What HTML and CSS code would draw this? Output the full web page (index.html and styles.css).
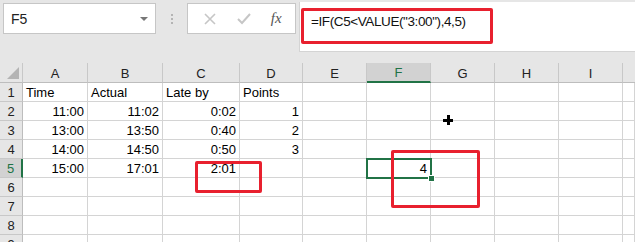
FILE: index.html
```html
<!DOCTYPE html>
<html lang="en">
<head>
  <meta charset="UTF-8">
  <title>Sheet - Late by</title>
  <link rel="stylesheet" href="styles.css">
</head>
<body>

  <div class="toolbar">
    <div class="name-box">
      <span>F5</span>
      <span class="arrow"></span>
    </div>
    <div class="grip"><i></i><i></i><i></i></div>
    <div class="fx-box">
      <svg width="14" height="14" viewBox="0 0 14 14"><path d="M2 2 L12 12 M12 2 L2 12" stroke="#c6c6c6" stroke-width="1.6" fill="none"/></svg>
      <svg width="16" height="14" viewBox="0 0 16 14"><path d="M2 7 L6 11 L14 2" stroke="#c6c6c6" stroke-width="2" fill="none"/></svg>
      <span class="fx">fx</span>
    </div>
    <div class="formula">=IF(C5&lt;VALUE("3:00"),4,5)</div>
  </div>

  <div class="sheet">
    <div class="corner"><span class="tri"></span></div>
    <div class="col-head">A</div>
    <div class="col-head">B</div>
    <div class="col-head">C</div>
    <div class="col-head">D</div>
    <div class="col-head">E</div>
    <div class="col-head active">F</div>
    <div class="col-head">G</div>
    <div class="col-head">H</div>
    <div class="col-head">I</div>
    <div class="col-head last"></div>

    <div class="row-head">1</div>
    <div class="cell">Time</div>
    <div class="cell">Actual</div>
    <div class="cell">Late by</div>
    <div class="cell">Points</div>
    <div class="cell"></div><div class="cell"></div><div class="cell"></div><div class="cell"></div><div class="cell"></div><div class="cell"></div>

    <div class="row-head">2</div>
    <div class="cell num">11:00</div>
    <div class="cell num">11:02</div>
    <div class="cell num">0:02</div>
    <div class="cell num">1</div>
    <div class="cell"></div><div class="cell"></div><div class="cell"></div><div class="cell"></div><div class="cell"></div><div class="cell"></div>

    <div class="row-head">3</div>
    <div class="cell num">13:00</div>
    <div class="cell num">13:50</div>
    <div class="cell num">0:40</div>
    <div class="cell num">2</div>
    <div class="cell"></div><div class="cell"></div><div class="cell"></div><div class="cell"></div><div class="cell"></div><div class="cell"></div>

    <div class="row-head">4</div>
    <div class="cell num">14:00</div>
    <div class="cell num">14:50</div>
    <div class="cell num">0:50</div>
    <div class="cell num">3</div>
    <div class="cell"></div><div class="cell"></div><div class="cell"></div><div class="cell"></div><div class="cell"></div><div class="cell"></div>

    <div class="row-head active">5</div>
    <div class="cell num">15:00</div>
    <div class="cell num">17:01</div>
    <div class="cell num">2:01</div>
    <div class="cell"></div>
    <div class="cell"></div>
    <div class="cell num">4</div>
    <div class="cell"></div><div class="cell"></div><div class="cell"></div><div class="cell"></div>

    <div class="row-head">6</div>
    <div class="cell"></div><div class="cell"></div><div class="cell"></div><div class="cell"></div><div class="cell"></div><div class="cell"></div><div class="cell"></div><div class="cell"></div><div class="cell"></div><div class="cell"></div>

    <div class="row-head">7</div>
    <div class="cell"></div><div class="cell"></div><div class="cell"></div><div class="cell"></div><div class="cell"></div><div class="cell"></div><div class="cell"></div><div class="cell"></div><div class="cell"></div><div class="cell"></div>

    <div class="row-head">8</div>
    <div class="cell"></div><div class="cell"></div><div class="cell"></div><div class="cell"></div><div class="cell"></div><div class="cell"></div><div class="cell"></div><div class="cell"></div><div class="cell"></div><div class="cell"></div>

    <div class="row-head">9</div>
    <div class="cell"></div><div class="cell"></div><div class="cell"></div><div class="cell"></div><div class="cell"></div><div class="cell"></div><div class="cell"></div><div class="cell"></div><div class="cell"></div><div class="cell"></div>
  </div>

  <!-- overlays: selection, cursor and the red call-outs -->
  <div class="selection"><span class="handle"></span></div>
  <div class="cursor"></div>
  <div class="callout callout-formula"></div>
  <div class="callout callout-late"></div>
  <div class="callout callout-result"></div>

</body>
</html>
```

FILE: styles.css
```css
body {
  margin: 0;
  background: #e6e6e6;
  font-family: 'Liberation Sans', Arial, sans-serif;
  font-size: 13px;
  color: #000;
  width: 635px;
  height: 242px;
  overflow: hidden;
  position: relative;
}

.toolbar {
  display: flex;
  align-items: flex-start;
  height: 63px;
  padding-top: 3px;
  box-sizing: border-box;
}

.name-box {
  margin-left: 3px;
  width: 153px;
  height: 31px;
  background: #fff;
  border: 1px solid #c6c6c6;
  box-sizing: border-box;
  display: flex;
  align-items: center;
  justify-content: space-between;
  padding: 0 7px 0 7px;
  font-size: 14px;
  color: #222;
}

.arrow {
  width: 0;
  height: 0;
  border-left: 4px solid transparent;
  border-right: 4px solid transparent;
  border-top: 4px solid #777;
}

.grip {
  width: 31px;
  height: 31px;
  display: flex;
  flex-direction: column;
  align-items: center;
  justify-content: center;
  gap: 2px;
}

.grip i {
  width: 2px;
  height: 2px;
  background: #b4b4b4;
}

.fx-box {
  width: 109px;
  height: 31px;
  background: #fff;
  border: 1px solid #c6c6c6;
  box-sizing: border-box;
  display: flex;
  align-items: center;
  justify-content: space-around;
  padding: 0 4px 0 6px;
}

.fx {
  font-family: 'Liberation Serif', serif;
  font-style: italic;
  font-size: 15px;
  color: #555;
}

.formula {
  flex: 1;
  margin-left: 3px;
  height: 50px;
  margin-top: -1px;
  background: #fff;
  border-left: 1px solid #d4d4d4;
  border-bottom: 1px solid #d4d4d4;
  box-sizing: border-box;
  padding: 12px 0 0 11px;
  font-size: 13.5px;
  letter-spacing: -0.4px;
  color: #111;
}

.sheet {
  display: grid;
  grid-template-columns: 23px 65px 75px 77px 63px 64px 64px 64px 64px 64px 12px;
  grid-template-rows: 20px repeat(9, 19px);
  background: #fff;
}

.corner {
  background: #e6e6e6;
  border-right: 1px solid #c8c8c8;
  border-bottom: 1px solid #bdbdbd;
  position: relative;
}

.tri {
  position: absolute;
  right: 3px;
  bottom: 3px;
  width: 0;
  height: 0;
  border-left: 12px solid transparent;
  border-bottom: 12px solid #b4b4b4;
}

.col-head {
  background: #e6e6e6;
  border-right: 1px solid #c8c8c8;
  border-bottom: 1px solid #bdbdbd;
  display: flex;
  align-items: center;
  justify-content: center;
  color: #222;
  padding-top: 1px;
}

.col-head.last {
  border-right: none;
}

.col-head.active {
  background: #d2d2d2;
  border-bottom: 2px solid #217346;
  color: #217346;
}

.row-head {
  background: #e6e6e6;
  border-right: 1px solid #bdbdbd;
  border-bottom: 1px solid #c8c8c8;
  display: flex;
  align-items: flex-end;
  justify-content: center;
  color: #222;
  line-height: 17px;
}

.row-head.active {
  background: #d2d2d2;
  border-right: 2px solid #217346;
  color: #217346;
}

.cell {
  border-right: 1px solid #d4d4d4;
  border-bottom: 1px solid #d4d4d4;
  display: flex;
  align-items: flex-end;
  padding: 0 3px;
  line-height: 17px;
  white-space: nowrap;
}

.cell.num {
  justify-content: flex-end;
}

.selection {
  position: absolute;
  left: 366px;
  top: 158px;
  width: 66px;
  height: 21px;
  border: 2px solid #217346;
  box-sizing: border-box;
}

.handle {
  position: absolute;
  right: -5px;
  bottom: -5px;
  width: 5px;
  height: 5px;
  background: #217346;
  border: 1px solid #fff;
}

.cursor {
  position: absolute;
  left: 443px;
  top: 115px;
  width: 10px;
  height: 10px;
  background:
    linear-gradient(#000, #000) center / 10px 3px no-repeat,
    linear-gradient(#000, #000) center / 3px 10px no-repeat;
}

.callout {
  position: absolute;
  border: 3px solid #e8202e;
  border-radius: 2px;
  box-sizing: border-box;
}

.callout-formula {
  left: 301px;
  top: 8px;
  width: 192px;
  height: 36px;
}

.callout-late {
  left: 195px;
  top: 161px;
  width: 67px;
  height: 32px;
}

.callout-result {
  left: 391px;
  top: 150px;
  width: 89px;
  height: 58px;
}
```
